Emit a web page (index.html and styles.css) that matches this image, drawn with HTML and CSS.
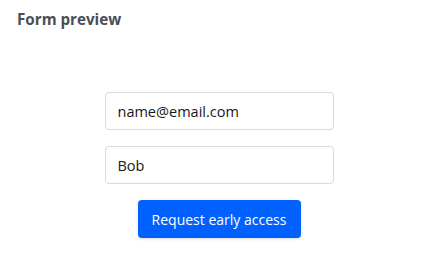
FILE: index.html
```html
<!DOCTYPE html>
<html>
<head>
<meta charset="utf-8">
<link rel="stylesheet" href="styles.css">
</head>
<body>
<div class="page">
  <h1 class="title">Form preview</h1>
  <form class="form">
    <input class="field" type="text" value="name@email.com">
    <input class="field" type="text" value="Bob">
    <button class="btn" type="button">Request early access</button>
  </form>
</div>
</body>
</html>
```

FILE: styles.css
```css
* { box-sizing: border-box; }
html, body { margin: 0; padding: 0; background: #ffffff; }
body { font-family: "Open Sans", "Liberation Sans", sans-serif; }
.page { padding: 8px 17px; }
.title {
  margin: 0;
  font-size: 15.2px;
  font-weight: 700;
  color: #4a4e55;
  line-height: 22px;
}
.form {
  display: flex;
  flex-direction: column;
  align-items: center;
  gap: 16px;
  margin-top: 62px;
  padding-left: 4px;
}
.field {
  width: 229px;
  height: 38px;
  border: 1px solid #d3dbe4;
  border-radius: 4px;
  padding: 0 12px;
  font-family: inherit;
  font-size: 14.5px;
  color: #16181c;
  background: #fff;
  outline: none;
  margin: 0;
}
.btn {
  height: 38px;
  width: 163px;
  background: #0061fe;
  color: #fff;
  border: none;
  border-radius: 4px;
  font-family: inherit;
  font-size: 14px;
  box-shadow: 0 1px 3px rgba(0,0,0,0.15);
  margin: 0;
  padding: 0;
}
```
